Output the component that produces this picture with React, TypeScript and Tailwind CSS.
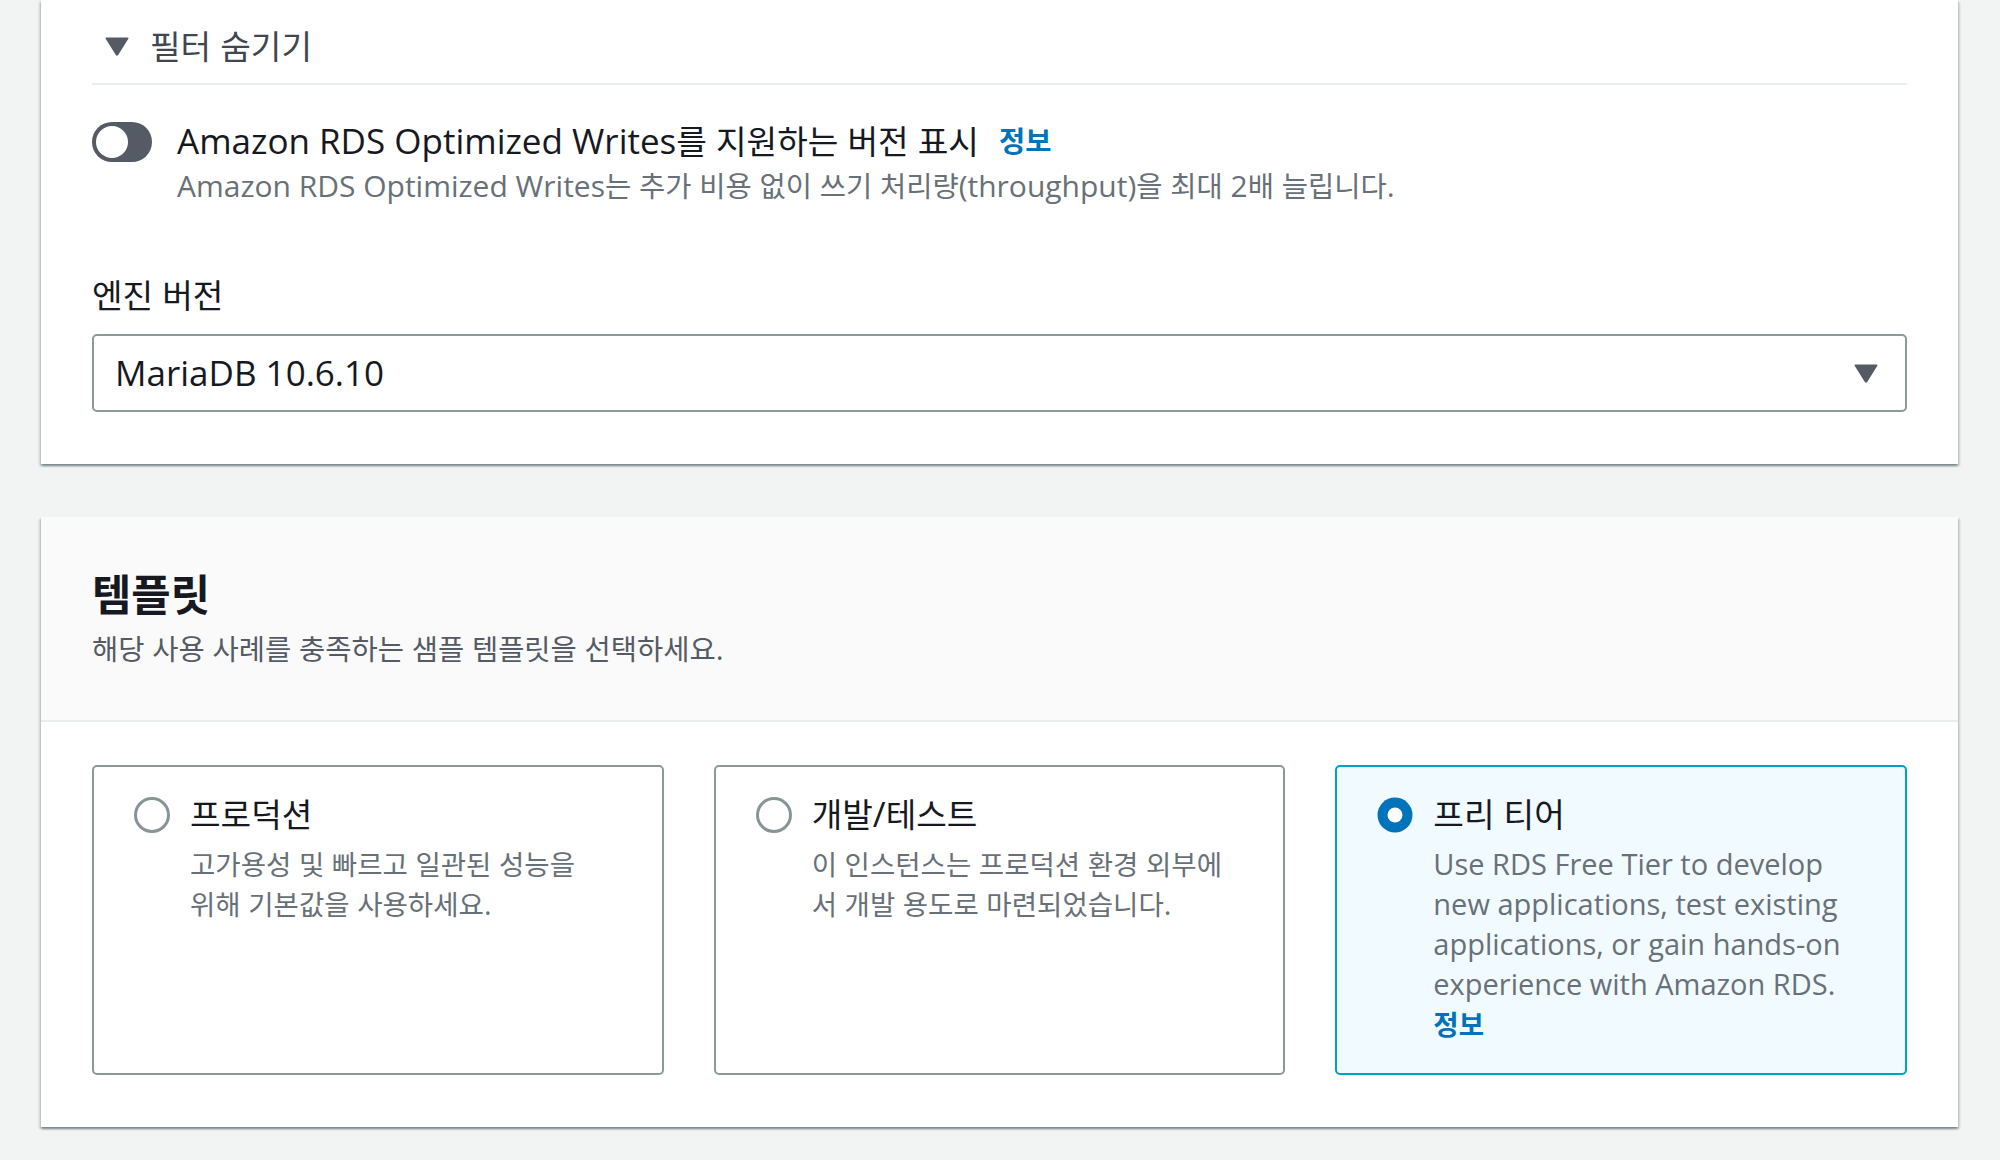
import React from 'react';

// Hangul runs are set a little smaller so the Korean fallback font matches the reference widths
const HANGUL = /([\u3131-\u318e\uac00-\ud7a3]+)/;

const T: React.FC<{ text: string }> = ({ text }) => (
  <>
    {text.split(HANGUL).map((part, i) =>
      HANGUL.test(part) ? (
        <span key={i} className="text-[0.95em] leading-none">
          {part}
        </span>
      ) : (
        <React.Fragment key={i}>{part}</React.Fragment>
      )
    )}
  </>
);

const cardShadow =
  'shadow-[0_2px_2px_0_rgba(0,28,36,0.35),2px_2px_2px_0_rgba(0,28,36,0.12),-2px_2px_2px_0_rgba(0,28,36,0.12)]';

const Caret: React.FC<{ className?: string }> = ({ className }) => (
  <svg width="24" height="19" viewBox="0 0 24 19" className={className}>
    <path d="M1.5 0.5 H22.5 Q24 0.5 23.2 2 L13.2 18 Q12 19.5 10.8 18 L0.8 2 Q0 0.5 1.5 0.5 Z" fill="#545b64" />
  </svg>
);

const Radio: React.FC<{ checked?: boolean }> = ({ checked }) =>
  checked ? (
    <svg width="36" height="36" viewBox="0 0 36 36" className="mt-[8px] shrink-0">
      <circle cx="18" cy="18" r="17.5" fill="#0073bb" />
      <circle cx="18" cy="18" r="7.5" fill="#ffffff" />
    </svg>
  ) : (
    <div className="mt-[8px] h-[36px] w-[36px] shrink-0 rounded-full border-[3px] border-[#879596] bg-white" />
  );

type Tile = {
  title: string;
  lines: string[];
  checked?: boolean;
  info?: boolean;
};

const tiles: Tile[] = [
  {
    title: '프로덕션',
    lines: ['고가용성 및 빠르고 일관된 성능을', '위해 기본값을 사용하세요.'],
  },
  {
    title: '개발/테스트',
    lines: ['이 인스턴스는 프로덕션 환경 외부에', '서 개발 용도로 마련되었습니다.'],
  },
  {
    title: '프리 티어',
    lines: [
      'Use RDS Free Tier to develop',
      'new applications, test existing',
      'applications, or gain hands-on',
      'experience with Amazon RDS.',
    ],
    checked: true,
    info: true,
  },
];

const TemplateTile: React.FC<{ tile: Tile }> = ({ tile }) => (
  <div
    className={
      tile.checked
        ? 'flex h-[310px] gap-[20px] rounded-[5px] border-2 border-[#00a1c9] bg-[#f1faff] pl-[40px] pr-[16px] pt-[22px]'
        : 'flex h-[310px] gap-[20px] rounded-[5px] border-2 border-[#8d9999] bg-white pl-[40px] pr-[16px] pt-[22px]'
    }
  >
    <Radio checked={tile.checked} />
    <div>
      <div className="whitespace-nowrap text-[35px] leading-[50px] text-[#16191f]">
        <T text={tile.title} />
      </div>
      <div className="mt-[5px] text-[29px] leading-[40px] text-[#687078]">
        {tile.lines.map(line => (
          <div key={line} className="whitespace-nowrap">
            <T text={line} />
          </div>
        ))}
        {tile.info && (
          <div className="font-bold text-[#0073bb]">
            <T text="정보" />
          </div>
        )}
      </div>
    </div>
  </div>
);

export default function App() {
  return (
    <div className="min-h-[1160px] bg-[#f2f3f3] pb-[32px] pl-[41px] pr-[42px] font-['Open_Sans','Noto_Sans_CJK_KR',sans-serif] text-[#16191f]">
      {/* Engine options card (top cut off) */}
      <section className={`bg-white px-[51px] pb-[52px] pt-[21px] ${cardShadow}`}>
        <div className="flex h-[50px] items-center">
          <Caret className="ml-[13px]" />
          <span className="ml-[21px] text-[35px] leading-[50px] text-[#414750]">
            <T text="필터 숨기기" />
          </span>
        </div>
        <div className="mt-[12px] h-[2px] bg-[#eaeded]" />

        <div className="mt-[31px] flex items-start gap-[25px]">
          <div className="mt-[6px] flex h-[40px] w-[60px] shrink-0 items-center rounded-full bg-[#545b64] px-[4px]">
            <div className="h-[32px] w-[32px] rounded-full bg-white" />
          </div>
          <div>
            <div className="flex h-[50px] items-center text-[35px] leading-[50px]">
              <span>
                <T text="Amazon RDS Optimized Writes를 지원하는 버전 표시" />
              </span>
              <a className="ml-[20px] text-[30px] font-bold leading-[50px] text-[#0073bb]">
                <T text="정보" />
              </a>
            </div>
            <div className="text-[30px] leading-[40px] text-[#687078]">
              <T text="Amazon RDS Optimized Writes는 추가 비용 없이 쓰기 처리량(throughput)을 최대 2배 늘립니다." />
            </div>
          </div>
        </div>

        <div className="mt-[64px] text-[35px] leading-[50px] text-[#16191f]">
          <T text="엔진 버전" />
        </div>
        <div className="mt-[14px] flex h-[78px] items-center justify-between rounded-[5px] border-2 border-[#8d9999] bg-white pl-[21px] pr-[27px]">
          <span className="text-[35px] leading-[50px]">MariaDB 10.6.10</span>
          <Caret />
        </div>
      </section>

      {/* Templates card */}
      <section className={`mt-[53px] bg-white ${cardShadow}`}>
        <div className="border-b-2 border-[#eaeded] bg-[#fafafa] px-[51px] pb-[51px] pt-[49px]">
          <h2 className="text-[45px] font-bold leading-[55px] text-[#16191f]">
            <T text="템플릿" />
          </h2>
          <p className="mt-[8px] text-[30px] leading-[40px] text-[#545b64]">
            <T text="해당 사용 사례를 충족하는 샘플 템플릿을 선택하세요." />
          </p>
        </div>
        <div className="grid grid-cols-3 gap-[50px] px-[51px] pb-[52px] pt-[43px]">
          {tiles.map(tile => (
            <TemplateTile key={tile.title} tile={tile} />
          ))}
        </div>
      </section>
    </div>
  );
}
